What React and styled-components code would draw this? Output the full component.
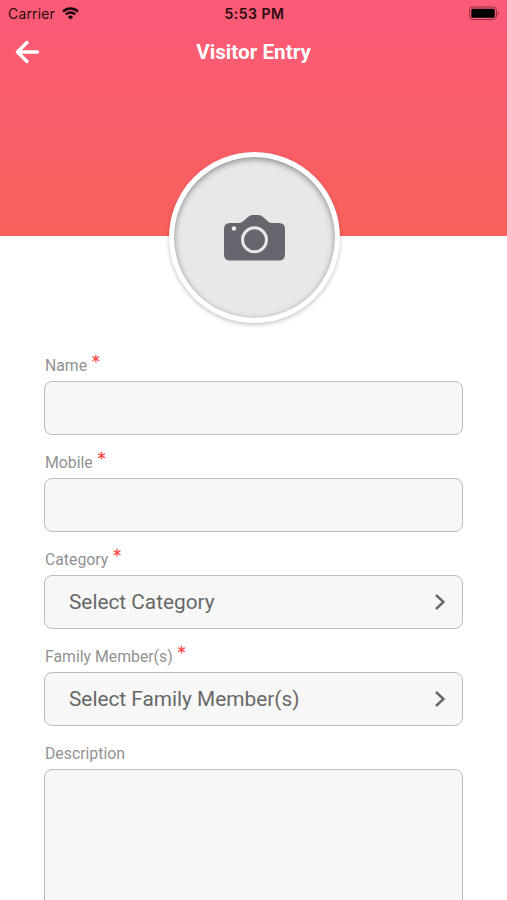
import styled, { createGlobalStyle } from "styled-components";

const GlobalStyle = createGlobalStyle`
  * { box-sizing: border-box; }

  body {
    margin: 0;
    background: #fff;
    font-family: Roboto, "Liberation Sans", sans-serif;
  }
`;

const Screen = styled.div`
  height: 900px;
  overflow: hidden;
  background: #fff;
`;

const Header = styled.header`
  height: 235.5px;
  background: linear-gradient(180deg, #fb5a78 0%, #f8615b 100%);
`;

const StatusBar = styled.div`
  display: grid;
  grid-template-columns: 1fr auto 1fr;
  align-items: center;
  height: 27px;
  padding: 0 6px 0 8px;
  color: #2b0a12;
  font-family: Inter, Roboto, sans-serif;
  font-size: 14px;
`;

const Carrier = styled.span`
  display: flex;
  align-items: center;
  gap: 7px;
  letter-spacing: 0.15px;
`;

const Time = styled.span`
  font-size: 14px;
  font-weight: 600;
  letter-spacing: 0.5px;
`;

const Battery = styled.svg`
  justify-self: end;
`;

const NavBar = styled.div`
  display: grid;
  grid-template-columns: 40px 1fr 40px;
  align-items: center;
  height: 50px;
  padding: 0 14px;
`;

const BackButton = styled.button`
  display: flex;
  padding: 0;
  border: 0;
  background: none;
  color: #fff;
  cursor: pointer;
`;

const Title = styled.h1`
  margin: 0;
  color: #fff;
  font-size: 20.7px;
  font-weight: 700;
  text-align: center;
`;

const PhotoRow = styled.div`
  display: flex;
  justify-content: center;
  margin-top: -83.5px;
  padding-left: 1px;
`;

const Photo = styled.button`
  display: flex;
  align-items: center;
  justify-content: center;
  width: 171px;
  height: 171px;
  padding: 0;
  border: 5px solid #fff;
  border-radius: 50%;
  background: #e8e8e8;
  box-shadow: 0 2px 4px rgba(0, 0, 0, 0.22), inset 0 2px 6px rgba(0, 0, 0, 0.42);
  cursor: pointer;
`;

const Form = styled.form`
  padding: 27px 44px 0 44px;
`;

const Field = styled.div`
  display: flex;
  flex-direction: column;
`;

const Label = styled.label`
  height: 31px;
  margin-top: ${({ $first }) => ($first ? 0 : "12px")};
  padding-left: 1px;
  color: #929292;
  font-size: 15.8px;
  line-height: 31px;
`;

const Required = styled.span`
  position: relative;
  top: -4px;
  margin-left: 5px;
  color: #ff4040;
  font-family: "DejaVu Sans", sans-serif;
  font-size: 15.5px;
  line-height: 1;
  -webkit-text-stroke: 0.3px #ff4040;
`;

const Input = styled.input`
  width: 100%;
  height: 54px;
  padding: 0 24px;
  border: 1px solid #bdbdbd;
  border-radius: 8px;
  background: #f7f7f7;
  font: inherit;
  outline: none;
`;

const Select = styled.button`
  display: flex;
  align-items: center;
  justify-content: space-between;
  width: 100%;
  height: 54px;
  padding: 0 16px 0 24px;
  border: 1px solid #bdbdbd;
  border-radius: 8px;
  background: #f7f7f7;
  color: #686868;
  font: inherit;
  font-size: 20.8px;
  cursor: pointer;
`;

const TextArea = styled.textarea`
  width: 100%;
  height: 160px;
  padding: 16px 24px;
  border: 1px solid #bdbdbd;
  border-radius: 8px;
  background: #f7f7f7;
  font: inherit;
  outline: none;
  resize: none;
`;

function WifiIcon() {
  return (
    <svg width="17" height="13" viewBox="0 0 17 13" fill="none" stroke="#1c060b" strokeWidth="2.4">
      <path d="M1 4.6a10.7 10.7 0 0 1 15 0" />
      <path d="M3.8 7.5a6.6 6.6 0 0 1 9.4 0" />
      <path d="M8.5 12.6 5.9 9.9a3.7 3.7 0 0 1 5.2 0z" fill="#1c060b" stroke="none" />
    </svg>
  );
}

function BatteryIcon() {
  return (
    <Battery width="32" height="15" viewBox="0 0 32 15">
      <rect x="0.5" y="1" width="27" height="12.5" rx="3.5" fill="none" stroke="#8f3045" />
      <rect x="2.3" y="2.8" width="23.5" height="9" rx="1.5" fill="#000" />
      <path d="M28.8 5.2q2.400 2 0 4z" fill="#8f3045" />
    </Battery>
  );
}

function BackIcon() {
  return (
    <svg width="28" height="24" viewBox="0 0 28 24" fill="none" stroke="#fff" strokeWidth="3.5" strokeLinecap="round" strokeLinejoin="round">
      <path d="M23.5 12H3.5M13 2.5 3.5 12l9.500 9.500" />
    </svg>
  );
}

function CameraIcon() {
  return (
    <svg width="61" height="46" viewBox="0 0 61 46">
      <path
        d="M6 8h8q3 0 5-1.500l5-4.500q2-2 4.500-2h6q2.500 0 4.500 2l5 4.500q2 1.500 4 1.500H55q6 0 6 6v25.500q0 6-6 6H6q-6 0-6-6V14q0-6 6-6z"
        fill="#67666f"
      />
      <circle cx="30.5" cy="24.8" r="12" fill="none" stroke="#e8e8e8" strokeWidth="3" />
      <circle cx="10" cy="13.5" r="2.2" fill="#f0f0f0" />
    </svg>
  );
}

function ChevronIcon() {
  return (
    <svg width="12" height="18" viewBox="0 0 12 18" fill="none" stroke="#686868" strokeWidth="2.4">
      <path d="M2 2l7.500 7L2 16" />
    </svg>
  );
}

function FormField({ id, label, required, first, children }) {
  return (
    <Field>
      <Label htmlFor={id} $first={first}>
        {label}
        {required && <Required>*</Required>}
      </Label>
      {children}
    </Field>
  );
}

export default function App() {
  return (
    <Screen>
      <GlobalStyle />
      <Header>
        <StatusBar>
          <Carrier>
            Carrier
            <WifiIcon />
          </Carrier>
          <Time>5:53 PM</Time>
          <BatteryIcon />
        </StatusBar>
        <NavBar>
          <BackButton type="button" aria-label="Back">
            <BackIcon />
          </BackButton>
          <Title>Visitor Entry</Title>
        </NavBar>
      </Header>

      <PhotoRow>
        <Photo type="button" aria-label="Add photo">
          <CameraIcon />
        </Photo>
      </PhotoRow>

      <Form>
        <FormField id="name" label="Name" required first>
          <Input id="name" type="text" />
        </FormField>
        <FormField id="mobile" label="Mobile" required>
          <Input id="mobile" type="tel" />
        </FormField>
        <FormField id="category" label="Category" required>
          <Select id="category" type="button">
            Select Category
            <ChevronIcon />
          </Select>
        </FormField>
        <FormField id="members" label="Family Member(s)" required>
          <Select id="members" type="button">
            Select Family Member(s)
            <ChevronIcon />
          </Select>
        </FormField>
        <FormField id="description" label="Description">
          <TextArea id="description" />
        </FormField>
      </Form>
    </Screen>
  );
}
